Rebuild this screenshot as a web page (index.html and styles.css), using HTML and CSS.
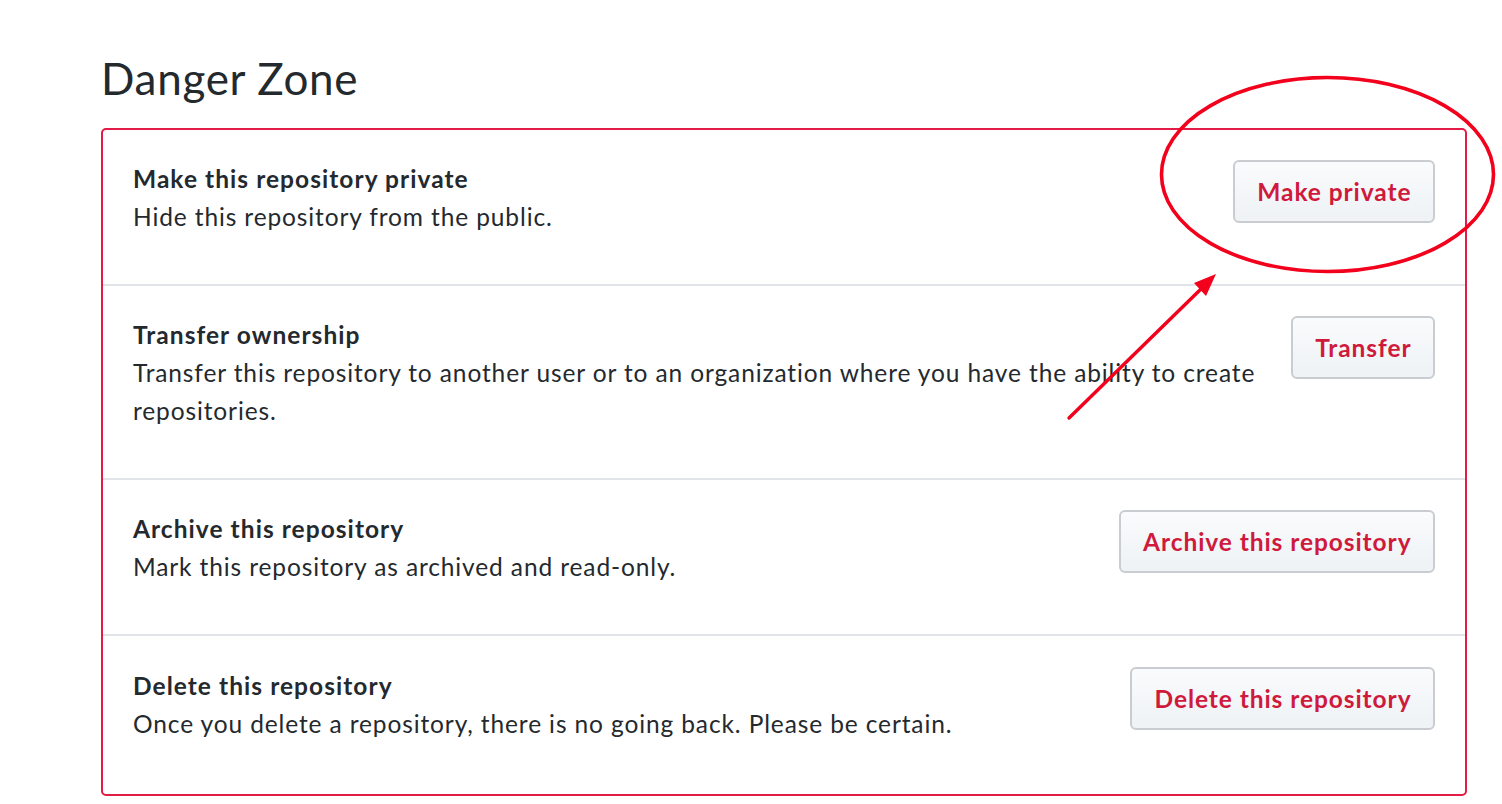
FILE: index.html
```html
<!DOCTYPE html>
<html lang="en">
<head>
<meta charset="utf-8">
<title>Danger Zone</title>
<link rel="stylesheet" href="styles.css">
</head>
<body>
<main class="page">
  <h2 class="title">Danger Zone</h2>
  <section class="danger-box">
    <div class="row">
      <div class="info">
        <strong class="row-title">Make this repository private</strong>
        <p class="row-desc">Hide this repository from the public.</p>
      </div>
      <button class="btn-danger" type="button">Make private</button>
    </div>
    <div class="row">
      <div class="info">
        <strong class="row-title">Transfer ownership</strong>
        <p class="row-desc">Transfer this repository to another user or to an organization where you have the ability to create repositories.</p>
      </div>
      <button class="btn-danger" type="button">Transfer</button>
    </div>
    <div class="row">
      <div class="info">
        <strong class="row-title">Archive this repository</strong>
        <p class="row-desc">Mark this repository as archived and read-only.</p>
      </div>
      <button class="btn-danger" type="button">Archive this repository</button>
    </div>
    <div class="row">
      <div class="info">
        <strong class="row-title">Delete this repository</strong>
        <p class="row-desc">Once you delete a repository, there is no going back. Please be certain.</p>
      </div>
      <button class="btn-danger" type="button">Delete this repository</button>
    </div>
  </section>
</main>
<svg class="annotation" width="1502" height="804" viewBox="0 0 1502 804" aria-hidden="true">
  <ellipse cx="1327.5" cy="174.5" rx="166" ry="97" fill="none" stroke="#f2001c" stroke-width="3.6"/>
  <line x1="1069" y1="418" x2="1202" y2="288" stroke="#f2001c" stroke-width="3.4" stroke-linecap="round"/>
  <polygon points="1216,274 1194,283 1206,296" fill="#f2001c"/>
</svg>
</body>
</html>
```
FILE: styles.css
```css
html, body {
  margin: 0;
  padding: 0;
  background: #ffffff;
}

body {
  width: 1502px;
  height: 804px;
  overflow: hidden;
  position: relative;
  font-family: Lato, "Noto Sans", "Liberation Sans", sans-serif;
  color: #24292e;
}

.page {
  padding: 50px 0 0 101px;
  width: 1366px;
}

.title {
  margin: 0 0 22px;
  font-size: 44px;
  font-weight: 400;
  line-height: 56px;
  letter-spacing: 0.7px;
  color: #24292e;
}

.danger-box {
  border: 2px solid #e31b47;
  border-radius: 5px;
}

.row {
  display: flex;
  align-items: flex-start;
  padding: 30px;
  border-top: 2px solid #e1e4e8;
}

.row:first-child {
  border-top: 0;
}

.row:last-child {
  padding-top: 31px;
  padding-bottom: 33px;
}

.info {
  flex: 1 1 auto;
  min-width: 0;
  margin-right: 30px;
}

.row-title {
  display: block;
  font-size: 24.5px;
  line-height: 38px;
  font-weight: 700;
  letter-spacing: 1.05px;
}

.row-desc {
  margin: 0 0 18px;
  font-size: 24.5px;
  line-height: 38px;
  letter-spacing: 0.88px;
}

.btn-danger {
  flex: 0 0 auto;
  margin-left: auto;
  padding: 11px 21.5px 11px 22.5px;
  font-family: inherit;
  font-size: 24.5px;
  line-height: 37px;
  font-weight: 700;
  letter-spacing: 0.93px;
  color: #cf1a3c;
  background: linear-gradient(180deg, #fafbfc 0%, #eff3f6 90%);
  border: 2px solid #c9cdd1;
  border-radius: 6px;
  white-space: nowrap;
}

.annotation {
  position: absolute;
  top: 0;
  left: 0;
  pointer-events: none;
}
```
